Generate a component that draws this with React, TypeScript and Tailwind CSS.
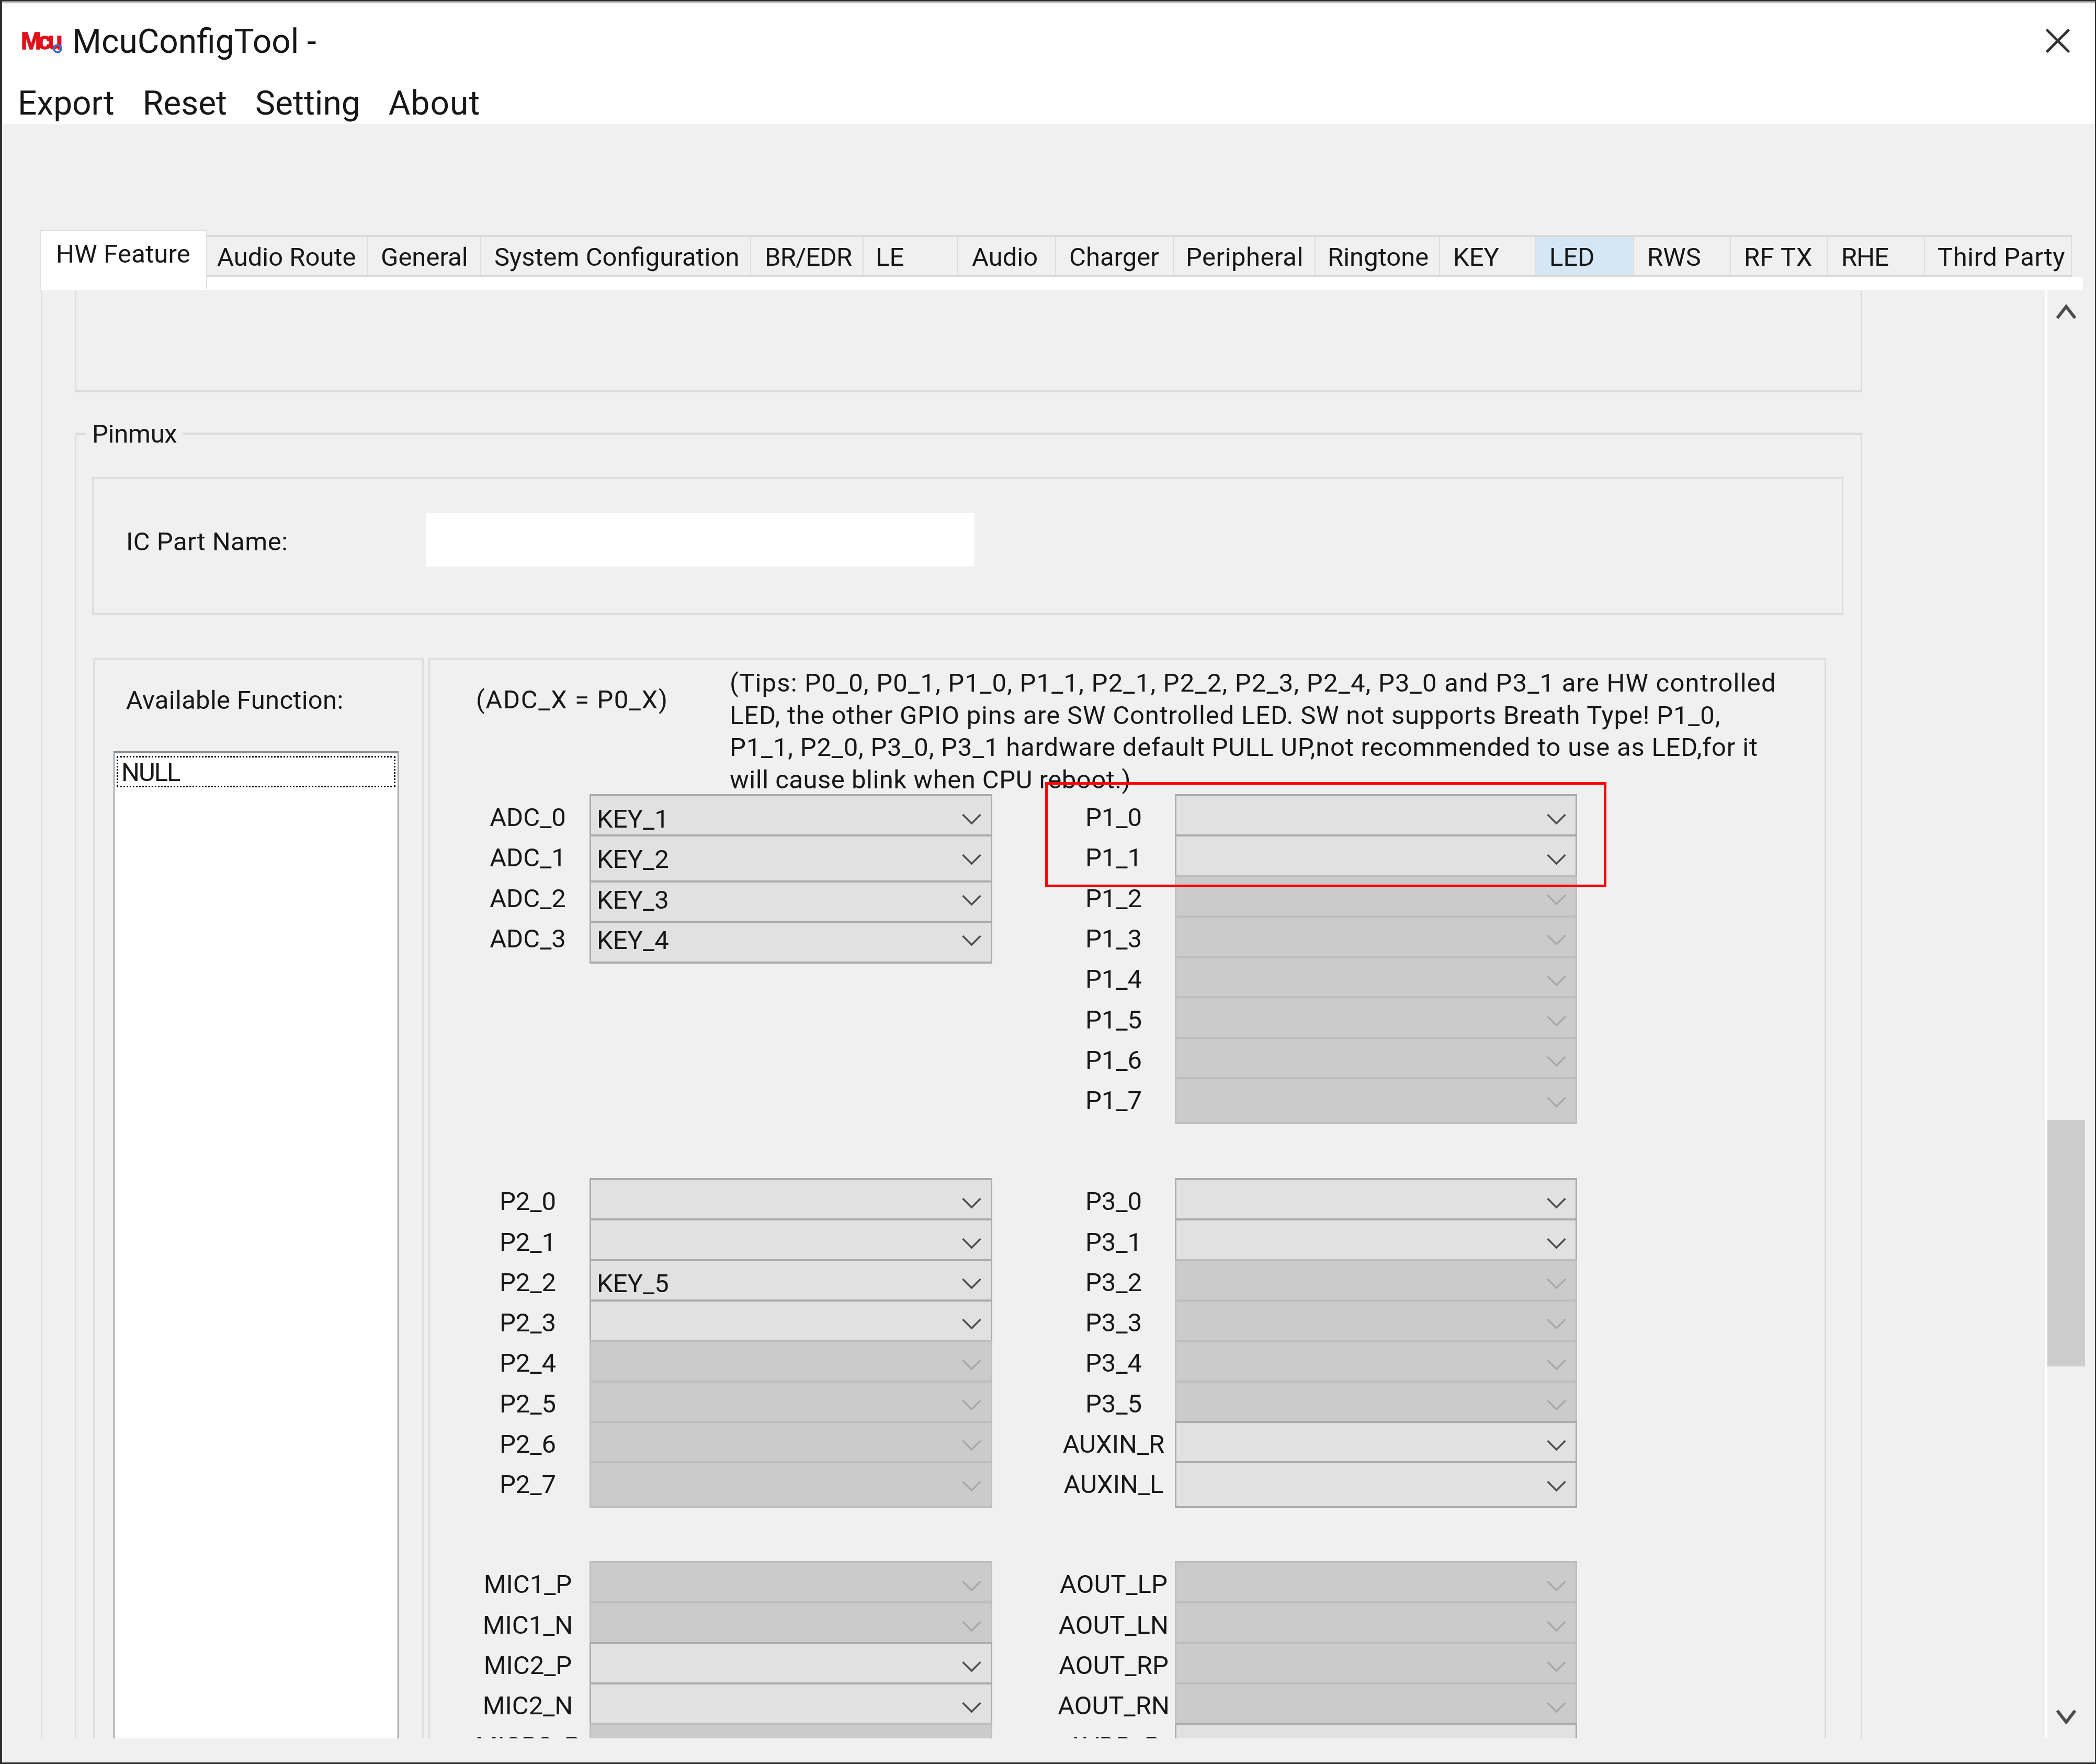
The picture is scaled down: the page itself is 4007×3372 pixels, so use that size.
type Cell = { text?: string; off?: boolean; h?: string; mt?: string; last?: boolean }

const tabs = [
  { label: 'Audio Route', cls: 'w-[307px] pl-[19px]' },
  { label: 'General', cls: 'w-[217px] pl-[25px]' },
  { label: 'System Configuration', cls: 'w-[516px] pl-[25px]' },
  { label: 'BR/EDR', cls: 'w-[215px] pl-[26px] tracking-[-0.8px]' },
  { label: 'LE', cls: 'w-[181px] pl-[23px]' },
  { label: 'Audio', cls: 'w-[187px] pl-[26px]' },
  { label: 'Charger', cls: 'w-[225px] pl-[25px]' },
  { label: 'Peripheral', cls: 'w-[271px] pl-[23px] tracking-[0.5px]' },
  { label: 'Ringtone', cls: 'w-[238px] pl-[23px]' },
  { label: 'KEY', cls: 'w-[184px] pl-[25px]' },
  { label: 'LED', cls: 'w-[187px] pl-[25px] bg-[#d5e6f5]' },
  { label: 'RWS', cls: 'w-[185px] pl-[25px]' },
  { label: 'RF TX', cls: 'w-[185px] pl-[25px] tracking-[0.5px]' },
  { label: 'RHE', cls: 'w-[186px] pl-[26px] tracking-[-1px]' },
  { label: 'Third Party', cls: 'w-[281px] pl-[24px] tracking-[0.5px]' },
]

const adcCells: Cell[] = [
  { text: 'KEY_1', h: 'h-[77px]' },
  { text: 'KEY_2', h: 'h-[88px]' },
  { text: 'KEY_3', h: 'h-[77px]', mt: 'mt-[13px]' },
  { text: 'KEY_4', h: 'h-[82px]', mt: 'mt-[13px]', last: true },
]

const cells = (list: string) =>
  list.split('').map((c, i, all): Cell => ({
    off: c === '0',
    h: i === all.length - 1 ? 'h-[90px]' : undefined,
    last: i === all.length - 1,
  }))

function Chevron({ off }: { off?: boolean }) {
  return (
    <svg viewBox="0 0 37 21" className={`w-[37px] h-[21px] shrink-0 ${off ? 'text-[#a8a8a8]' : 'text-[#4d4d4d]'}`} fill="none" stroke="currentColor" strokeWidth="3.5">
      <path d="M1.5 2 18.5 19 35.5 2" />
    </svg>
  )
}

function Combo({ text, off, h = 'h-[77.3px]', mt = 'mt-[23px]', last }: Cell) {
  return (
    <div
      className={`${h} overflow-hidden border-t-[4px] ${last ? 'border-b-[4px]' : ''} border-x-[3px] ${
        off ? 'bg-[#cbcbcb] border-[#bdbdbd]' : 'bg-[#e1e1e1] border-[#acacac]'
      }`}
    >
      <div className={`${mt} h-[40px] flex items-center justify-between pl-[11px] pr-[18px]`}>
        <span>{text}</span>
        <Chevron off={off} />
      </div>
    </div>
  )
}

function PinColumn({ labels, items, labelW, comboW }: { labels: string[]; items: Cell[]; labelW: string; comboW: string }) {
  return (
    <div className="flex items-start">
      <div className={`${labelW} pt-[6px] flex flex-col`}>
        {labels.map((l) => (
          <div key={l} className="h-[77.3px] flex items-center justify-center whitespace-nowrap">
            {l}
          </div>
        ))}
      </div>
      <div className={`${comboW} flex flex-col`}>
        {items.map((c, i) => (
          <Combo key={i} {...c} />
        ))}
      </div>
    </div>
  )
}

function PinSection({ className, left, right }: { className?: string; left: [string[], Cell[]]; right: [string[], Cell[]] }) {
  return (
    <div className={`flex items-start gap-[115px] ${className ?? ''}`}>
      <PinColumn labels={left[0]} items={left[1]} labelW="w-[236px]" comboW="w-[770px]" />
      <PinColumn labels={right[0]} items={right[1]} labelW="w-[234px]" comboW="w-[769px]" />
    </div>
  )
}

export default function App() {
  return (
    <div className="relative w-[4007px] h-[3372px] flex flex-col bg-[#f0f0f0] border-t-2 border-l-[4px] border-r-2 border-b-[3px] border-[#2e2e2e] text-[#171717] text-[49px] leading-none font-[family-name:Roboto,sans-serif] overflow-hidden">
      {/* Заголовок и меню */}
      <header className="h-[235px] shrink-0 bg-white">
        <div className="h-[5px] bg-gradient-to-b from-[#7d7d7d] to-white" />
        <div className="h-[145px] flex items-center pl-[36px]">
          <div className="relative w-[98px] h-[60px] shrink-0">
            <span className="block pt-[4px] text-[47px] font-bold tracking-[-7px] text-[#e0101c] [-webkit-text-stroke:1.5px_#e0101c] font-[family-name:'Liberation_Sans',sans-serif]">
              Mcu
            </span>
            <svg viewBox="0 0 20 20" className="absolute left-[60px] top-[33px] w-[20px] h-[20px]" fill="none" stroke="#3c6fc4" strokeWidth="4">
              <circle cx="10" cy="10" r="7" />
            </svg>
          </div>
          <span className="text-[64px]">McuConfigTool -</span>
          <svg viewBox="0 0 46 46" className="ml-auto mr-[48px] -mt-[4px] w-[46px] h-[46px]" fill="none" stroke="#333333" strokeWidth="5" strokeLinecap="round">
            <path d="M3 3 43 43M43 3 3 43" />
          </svg>
        </div>
        <nav className="flex pl-[30px] pt-[14px] gap-[54px] text-[64px]">
          <span>Export</span>
          <span>Reset</span>
          <span>Setting</span>
          <span className="tracking-[1px]">About</span>
        </nav>
      </header>

      {/* Вкладки */}
      <div className="mt-[202px] ml-[73px] h-[91px] shrink-0 flex items-end">
        <div className="w-[319px] h-[114px] -mb-[23px] pl-[28px] pt-[19px] bg-white border-x-2 border-t-[3px] border-[#e0e0e0] relative tracking-[0.2px]">
          HW Feature
        </div>
        <div className="flex h-[81px] border-t-[4px] border-b-[4px] border-[#dadada]">
          {tabs.map((t) => (
            <div key={t.label} className={`${t.cls} h-full pt-[4px] flex items-center whitespace-nowrap border-r-2 border-[#dedede]`}>
              {t.label}
            </div>
          ))}
        </div>
      </div>
      <div className="ml-[74px] w-[3904px] h-[25px] shrink-0 bg-white" />

      <div className="ml-[74px] h-[2768px] shrink-0 flex">
        {/* Прокручиваемая страница */}
        <div className="w-[3832px] overflow-hidden border-l-2 border-[#dedede]">
          <div className="ml-[63px] w-[3417px] h-[195px] border-x-[3px] border-b-[4px] border-[#dcdcdc]" />

          <div className="relative mt-[77px] ml-[63px] w-[3417px] h-[2600px] border-x-[3px] border-t-[4px] border-[#dcdcdc]">
            <div className="absolute -top-[27px] left-[19px] px-[11px] h-[50px] flex items-center bg-[#f0f0f0] tracking-[-0.3px]">Pinmux</div>

            <div className="mt-[81px] ml-[30px] w-[3348px] h-[263px] pb-[23px] border-[3px] border-[#dcdcdc] flex items-center">
              <span className="ml-[62px] w-[574px] pt-[6px] tracking-[0.5px]">IC Part Name:</span>
              <div className="w-[1048px] h-[102px] bg-white" />
            </div>

            <div className="mt-[83px] ml-[32px] flex gap-[9px] h-[2400px]">
              {/* Список функций */}
              <div className="w-[632px] border-[3px] border-[#dedede]">
                <div className="h-[175px] pl-[60px] pt-[53px] tracking-[0.3px]">Available Function:</div>
                <div className="ml-[36px] w-[545px] h-[2000px] bg-white border-x-2 border-t-[4px] border-[#8a8f96] px-[4px] pt-[5px]">
                  <div className="h-[60px] flex items-center pt-[2px] pl-[6px] border-[3px] border-dotted border-[#000000] tracking-[-2px]">NULL</div>
                </div>
              </div>

              {/* Назначение выводов */}
              <div className="w-[2672px] border-[3px] border-[#dedede] pl-[69px]">
                <div className="h-[257px] flex items-start">
                  <div className="w-[504px] pl-[19px] mt-[52px] whitespace-nowrap tracking-[1.6px]">(ADC_X = P0_X)</div>
                  <div className="pt-[14px] leading-[61.5px] whitespace-nowrap">
                    <div className="tracking-[1.2px]">(Tips: P0_0, P0_1, P1_0, P1_1, P2_1, P2_2, P2_3, P2_4, P3_0 and P3_1 are HW controlled</div>
                    <div className="tracking-[0.83px]">LED, the other GPIO pins are SW Controlled LED. SW not supports Breath Type! P1_0,</div>
                    <div className="tracking-[0.8px]">P1_1, P2_0, P3_0, P3_1 hardware default PULL UP,not recommended to use as LED,for it</div>
                    <div className="tracking-[0.5px]">will cause blink when CPU reboot.)</div>
                  </div>
                </div>
                <PinSection
                  left={[['ADC_0', 'ADC_1', 'ADC_2', 'ADC_3'], adcCells]}
                  right={[['P1_0', 'P1_1', 'P1_2', 'P1_3', 'P1_4', 'P1_5', 'P1_6', 'P1_7'], cells('11000000')]}
                />
                <PinSection
                  className="mt-[103px]"
                  left={[
                    ['P2_0', 'P2_1', 'P2_2', 'P2_3', 'P2_4', 'P2_5', 'P2_6', 'P2_7'],
                    cells('11110000').map((c, i) => (i === 2 ? { ...c, text: 'KEY_5' } : c)),
                  ]}
                  right={[['P3_0', 'P3_1', 'P3_2', 'P3_3', 'P3_4', 'P3_5', 'AUXIN_R', 'AUXIN_L'], cells('11000011')]}
                />
                <PinSection
                  className="mt-[101px]"
                  left={[['MIC1_P', 'MIC1_N', 'MIC2_P', 'MIC2_N', 'MICBS_P'], cells('00110')]}
                  right={[['AOUT_LP', 'AOUT_LN', 'AOUT_RP', 'AOUT_RN', 'AVDD_R'], cells('00001')]}
                />
              </div>
            </div>
          </div>
        </div>

        {/* Полоса прокрутки */}
        <div className="w-[76px] flex flex-col items-center border-l-[4px] border-white">
          <svg viewBox="0 0 40 28" className="mt-[27px] w-[40px] h-[28px] shrink-0" fill="none" stroke="#4d4d4d" strokeWidth="6">
            <path d="M3 26 20 4 37 26" />
          </svg>
          <div className="mt-[1531px] w-[72px] h-[471px] shrink-0 bg-[#cdcdcd]" />
          <svg viewBox="0 0 40 28" className="mt-auto mb-[27px] w-[40px] h-[28px] shrink-0" fill="none" stroke="#4d4d4d" strokeWidth="6">
            <path d="M3 2 20 24 37 2" />
          </svg>
        </div>
      </div>

      {/* Красная рамка-выделение */}
      <div className="absolute left-[1994px] top-[1493px] w-[1073px] h-[201px] border-[5px] border-[#ff0000] z-10" />
    </div>
  )
}
